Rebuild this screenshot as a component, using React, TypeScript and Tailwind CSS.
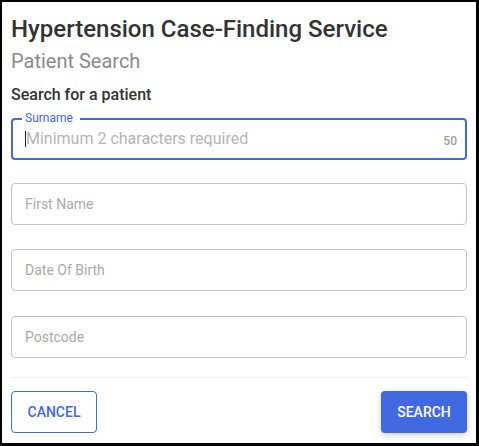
import React from 'react';

const fields = ['First Name', 'Date Of Birth', 'Postcode'];

export default function App() {
    return (
        <div
            className="w-[479px] h-[446px] bg-white border-black border-t-2 border-l-2 border-r-[3px] border-b-[3px] px-[9px] pt-[11px] text-[#333333]"
            style={{ fontFamily: 'Roboto, "Liberation Sans", sans-serif' }}
        >
            <h1 className="text-[24px] leading-8 font-medium">Hypertension Case-Finding Service</h1>
            <h2 className="mt-[2px] text-[20px] leading-7 text-[#8a8a8a]">Patient Search</h2>
            <h3 className="mt-2 text-[16px] leading-6 font-medium">Search for a patient</h3>

            {/* Surname, focused */}
            <div className="relative mt-[11px] h-[42px] rounded-[4px] border-2 border-[#4169e1] flex items-center pl-[12px] pr-[8px]">
                <span className="absolute -top-[10px] left-[9px] bg-white pl-[3px] pr-[7px] text-[12px] leading-4 text-[#4169e1]">
                    Surname
                </span>
                <span className="w-px h-[16px] bg-[#222]" />
                <span className="flex-1 text-[16px] leading-6 text-[#b5b5b5]">Minimum 2 characters required</span>
                <span className="mt-[3px] text-[12px] font-medium text-[#9e9e9e]">50</span>
            </div>

            {fields.map((f, i) => (
                <div
                    key={f}
                    className={`${i === 0 ? 'mt-[23px]' : i === 1 ? 'mt-6' : 'mt-[25px]'} h-[42px] rounded-[4px] border border-[#c4c4c4] flex items-center px-[13px]`}
                >
                    <span className="text-[14px] leading-5 text-[#aaaaaa]">{f}</span>
                </div>
            ))}

            <div className="mt-[19px] h-px bg-[#eeeeee]" />

            <div className="mt-[13px] flex justify-between">
                <button className="w-[86px] h-[42px] rounded-[4px] border border-[#4169e1] text-[#4169e1] text-[14px] font-medium">
                    CANCEL
                </button>
                <button className="w-[86px] h-[42px] rounded-[4px] bg-[#4169e1] text-white text-[14px] font-medium shadow-[0_2px_6px_rgba(0,0,0,0.2)]">
                    SEARCH
                </button>
            </div>
        </div>
    );
}
